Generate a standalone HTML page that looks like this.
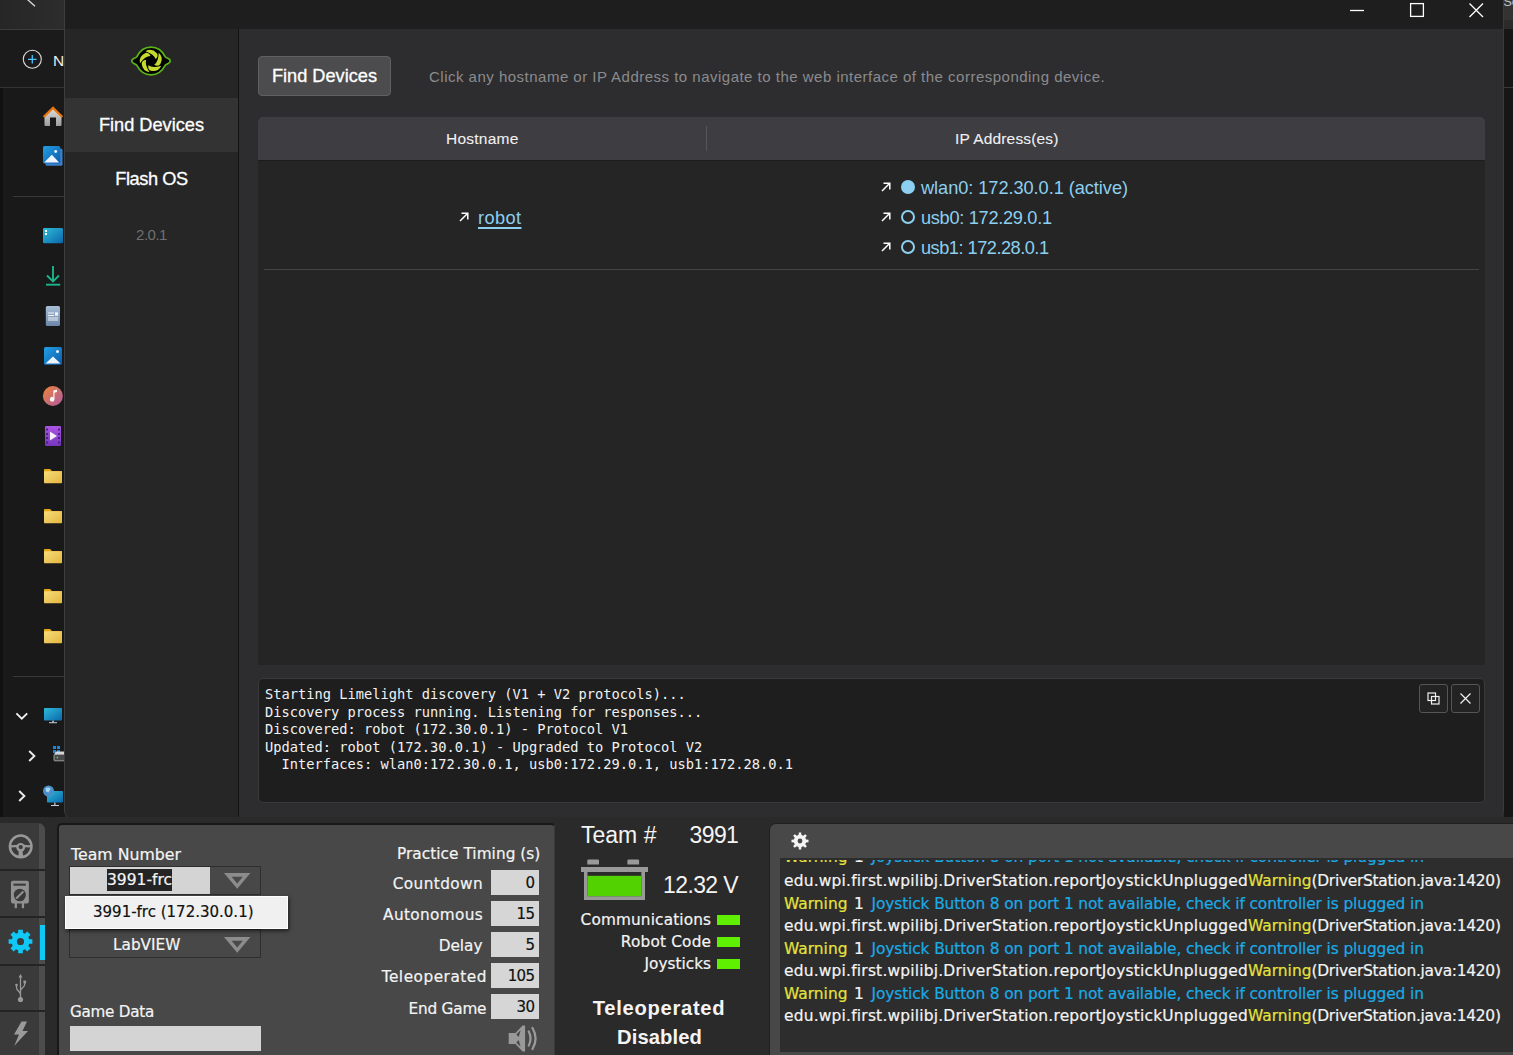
<!DOCTYPE html>
<html lang="en">
<head>
<meta charset="utf-8">
<title>Limelight Hardware Manager</title>
<style>
*{box-sizing:border-box;margin:0;padding:0}
html,body{width:1513px;height:1055px;overflow:hidden;background:#2a2a2a}
body{position:relative;font-family:"Liberation Sans",sans-serif;color:#fff}
.a{position:absolute}
.t{position:absolute;white-space:pre;line-height:1}
/* ---------- explorer (left, behind) ---------- */
#exp{left:0;top:0;width:65px;height:817px;background:#191919;overflow:hidden}
#exp .top{left:0;top:0;width:65px;height:29px;background:linear-gradient(90deg,#262626,#2d2d2d)}
#exp .tb{left:0;top:29px;width:65px;height:59px;background:#1b1b1b;border-top:1px solid #3b3b3b;border-bottom:1px solid #333}
#exp .strip{left:0;top:88px;width:3px;height:729px;background:#111}
/* ---------- right sliver ---------- */
#rs{left:1504px;top:0;width:9px;height:817px;background:#161616;overflow:hidden}
/* ---------- app window ---------- */
#win{left:64px;top:0;width:1440px;height:817px;background:#2d2d2f;border-left:1px solid #3d3d3d;border-right:1px solid #3a3a3a;border-radius:0 0 6px 6px;overflow:hidden}
#title{left:0;top:0;width:1440px;height:29px;background:#1e1e1e}
#side{left:0;top:29px;width:174px;height:788px;background:#262626;border-right:1px solid #131313}
#sel{left:0;top:69px;width:173px;height:54px;background:#333}

/* app text */
.nav{left:0;width:173px;text-align:center;font-size:18.2px;letter-spacing:0;color:#fff;-webkit-text-stroke:.3px #fff}
#btn{left:193px;top:56px;width:133px;height:40px;background:#4c4c4f;border:1px solid #606063;border-radius:4px;font-size:18.2px;letter-spacing:0;-webkit-text-stroke:.3px #fff;text-align:center;line-height:38px;color:#fff}
#hint{left:364px;top:69px;font-size:15px;letter-spacing:.49px;color:#8b8b8e}
#th{left:193px;top:117px;width:1227px;height:44px;background:#3e3d42;border-radius:5px 5px 0 0;border-bottom:1px solid #1d1d1d}
#th i{left:448px;top:9px;width:1px;height:25px;background:#56565a}
.h{font-size:15.5px;letter-spacing:.25px;-webkit-text-stroke:.1px #f0f0f0;color:#f0f0f0;top:14px}
#tb{left:193px;top:161px;width:1227px;height:504px;background:#252525}
#rowline{left:6px;top:108px;width:1215px;height:1px;background:#454547}
.lnk{font-size:18.2px;color:#8ccff0}
.arr{width:10px;height:10px}
.dot{width:14px;height:14px;border-radius:50%;border:2px solid #8ccff0}
.dot.f{background:#8ccff0}
#log{left:193px;top:678px;width:1227px;height:125px;background:#1e1e1e;border:1px solid #3a3a3c;border-radius:5px}
#log pre{position:absolute;left:6px;top:7px;font-family:"DejaVu Sans Mono","Liberation Mono",monospace;font-size:13.71px;line-height:17.5px;color:#f2f2f2}
.lb{top:5px;width:28.5px;height:28.5px;border:1px solid #55555a;border-radius:3px;background:#232323}

.d{font-family:"DejaVu Sans","Liberation Sans",sans-serif;color:#f4f4f4;-webkit-text-stroke:.2px currentColor}
.d.l{font-family:"Liberation Sans",sans-serif;-webkit-text-stroke:0}
#tabs{left:0;top:823px;width:45px;height:232px;background:#3a3a3a;border-radius:0 7px 0 0;overflow:hidden}
#tabs b{position:absolute;left:39.3px;top:0;width:5.7px;height:232px;background:#4c4c4c}
#tabs u{position:absolute;left:0;width:45px;height:2px;background:#242424}
#p1{left:57px;top:822.5px;width:498px;height:240px;background:#484848;border:2px solid #181818;border-right:1px solid #3a3a3a;border-radius:5px 4px 0 0}
#p2{left:769px;top:823px;width:760px;height:240px;background:#484848;border:1px solid #1f1f1f;border-radius:7px}
#msgs{left:780px;top:858px;width:733px;height:194px;background:#2d2d2d;overflow:hidden}
.fld{background:#d6d6d6;color:#111;text-align:right;font-size:15px;letter-spacing:-.65px;line-height:26.8px;padding-right:4.6px;width:48px;height:25px;left:491px}
.lab{font-size:15.3px;text-align:right;width:200px}
.m{left:4px;font-size:15.45px;white-space:pre;line-height:22px}
.y{color:#e6e23c}.bl{color:#1aabe6}

</style>
</head>
<body>
<!-- ============ EXPLORER ============ -->
<div id="exp" class="a">
  <div class="a top"></div>
  <div class="a tb"></div>
  <div class="a strip"></div>

  <svg class="a" style="left:0;top:0" width="0" height="0"><defs>
    <linearGradient id="gf" x1="0" y1="0" x2="1" y2="1"><stop offset="0" stop-color="#f8dc7c"/><stop offset="1" stop-color="#e2b53c"/></linearGradient>
    <linearGradient id="gb" x1="0" y1="0" x2="1" y2="1"><stop offset="0" stop-color="#22a0e4"/><stop offset="1" stop-color="#0c5aac"/></linearGradient>
    <linearGradient id="gc" x1="0" y1="0" x2="1" y2="1"><stop offset="0" stop-color="#2fbcd8"/><stop offset="1" stop-color="#0a66ac"/></linearGradient>
    <linearGradient id="gd" x1="0" y1="0" x2="0" y2="1"><stop offset="0" stop-color="#aabed6"/><stop offset="1" stop-color="#6a86a8"/></linearGradient>
    <linearGradient id="gm" x1="0" y1="0" x2="1" y2="1"><stop offset="0" stop-color="#ee8436"/><stop offset="1" stop-color="#b05aa4"/></linearGradient>
    <linearGradient id="gv" x1="0" y1="0" x2="0" y2="1"><stop offset="0" stop-color="#ac54e6"/><stop offset="1" stop-color="#7636bc"/></linearGradient>
    <linearGradient id="gh" x1="0" y1="0" x2="0" y2="1"><stop offset="0" stop-color="#dedede"/><stop offset="1" stop-color="#9c9c9c"/></linearGradient>
    <linearGradient id="gg" x1="0" y1="0" x2="0" y2="1"><stop offset="0" stop-color="#22b898"/><stop offset="1" stop-color="#14a884"/></linearGradient>
  </defs></svg>
  <svg class="a" style="left:26px;top:0" width="12" height="8" viewBox="0 0 12 8" fill="none" stroke="#dcdcdc" stroke-width="1.3"><path d="M1.5-.500L9 6.3"/></svg>
  <svg class="a" style="left:22px;top:49px" width="21" height="21" viewBox="0 0 21 21" fill="none"><circle cx="10.3" cy="10.3" r="9" stroke="#dedede" stroke-width="1.1"/><path d="M10.3 6v8.6M6 10.3h8.6" stroke="#4cc2ff" stroke-width="1.3"/></svg>
  <div class="t" style="left:53px;top:52.5px;font-size:15.5px;color:#eee">N</div>
  <svg class="a" style="left:42px;top:105px" width="22" height="22" viewBox="0 0 22 22"><path d="M2.5 10.5L11 3.5l8.5 7V20a1 1 0 0 1-1 1H14V12.5H8V21H3.5a1 1 0 0 1-1-1z" fill="url(#gh)"/><path d="M.800 11.3L11 1.3l10.2 10-1.6 1.5L11 4.6l-8.6 8.2z" fill="#e8760e"/></svg>
  <svg class="a" style="left:43px;top:146px" width="21" height="21" viewBox="0 0 21 21"><rect x="2.5" y="2.5" width="17" height="17.3" rx="1.5" fill="#3b7fc8"/><rect x="0" y="0" width="17.2" height="17.4" rx="1.5" fill="url(#gb)"/><path d="M1.2 16.4L8.8 8.8l7.4 7.6z" fill="#eef4fb"/><circle cx="12.7" cy="5.5" r="1.4" fill="#f4f4f4"/></svg>
  <div class="a" style="left:13px;top:196px;width:52px;height:1px;background:#383838"></div>
  <svg class="a" style="left:43px;top:228px" width="21" height="16" viewBox="0 0 21 16"><rect x="0" y="0" width="20" height="15.2" rx="1.3" fill="url(#gc)"/><rect x="2" y="2" width="2" height="2" fill="#fff"/><rect x="2" y="5" width="2" height="2" fill="#fff"/></svg>
  <svg class="a" style="left:45px;top:265px" width="16" height="22" viewBox="0 0 16 22" fill="none" stroke="url(#gg)" stroke-width="1.9"><path d="M8 1v15M2 10.5l6 6 6-6" stroke="#1cb48c"/><path d="M1 19.7h14.2" stroke="#1cb48c"/></svg>
  <svg class="a" style="left:45px;top:306px" width="16" height="21" viewBox="0 0 16 21"><rect x=".800" y="0" width="14.2" height="20" rx="1.5" fill="url(#gd)"/><path d="M3 7h6M3 9.5h6M3 12h10M3 14h10" stroke="#f0f3f8" stroke-width="1"/><rect x="10" y="6.3" width="3" height="3.4" fill="#f0f3f8"/></svg>
  <svg class="a" style="left:44px;top:347px" width="19" height="19" viewBox="0 0 19 19"><rect x="0" y="0" width="18" height="17.8" rx="1.5" fill="url(#gb)"/><path d="M1.5 16.5L9 9.5l7.5 7z" fill="#eef4fb"/><circle cx="13.5" cy="4.6" r="1.5" fill="#f4f4f4"/></svg>
  <svg class="a" style="left:42px;top:385px" width="22" height="22" viewBox="0 0 22 22"><circle cx="10.9" cy="11" r="10" fill="url(#gm)"/><path d="M11.3 5.5l3.7-1v2.6l-2.5.700v6.5a2.3 2.3 0 1 1-1.2-2z" fill="#f6f6f6"/></svg>
  <svg class="a" style="left:45px;top:426px" width="17" height="21" viewBox="0 0 17 21"><rect x="0" y="0" width="16" height="20" rx="1.3" fill="url(#gv)"/><path d="M5 5.5l7 4.5-7 4.5z" fill="#f4f0fa"/><path d="M1 2.5h2v2H1zM1 7h2v2H1zM1 11h2v2H1zM1 15.5h2v2H1zM13 2.5h2v2h-2zM13 7h2v2h-2zM13 11h2v2h-2zM13 15.5h2v2h-2z" fill="#4a2080"/></svg>
  <svg class="a" style="left:44px;top:469px" width="18" height="15" viewBox="0 0 18 15"><path d="M.8 0h5.4l1.6 2H17.2a.8.8 0 0 1 .8.8V3H0V.8A.8.8 0 0 1 .8 0z" fill="#e5a818"/><rect x="0" y="2.3" width="18" height="12" rx=".8" fill="url(#gf)"/></svg>
  <svg class="a" style="left:44px;top:509px" width="18" height="15" viewBox="0 0 18 15"><path d="M.8 0h5.4l1.6 2H17.2a.8.8 0 0 1 .8.8V3H0V.8A.8.8 0 0 1 .8 0z" fill="#e5a818"/><rect x="0" y="2.3" width="18" height="12" rx=".8" fill="url(#gf)"/></svg>
  <svg class="a" style="left:44px;top:549px" width="18" height="15" viewBox="0 0 18 15"><path d="M.8 0h5.4l1.6 2H17.2a.8.8 0 0 1 .8.8V3H0V.8A.8.8 0 0 1 .8 0z" fill="#e5a818"/><rect x="0" y="2.3" width="18" height="12" rx=".8" fill="url(#gf)"/></svg>
  <svg class="a" style="left:44px;top:589px" width="18" height="15" viewBox="0 0 18 15"><path d="M.8 0h5.4l1.6 2H17.2a.8.8 0 0 1 .8.8V3H0V.8A.8.8 0 0 1 .8 0z" fill="#e5a818"/><rect x="0" y="2.3" width="18" height="12" rx=".8" fill="url(#gf)"/></svg>
  <svg class="a" style="left:44px;top:629px" width="18" height="15" viewBox="0 0 18 15"><path d="M.8 0h5.4l1.6 2H17.2a.8.8 0 0 1 .8.8V3H0V.8A.8.8 0 0 1 .8 0z" fill="#e5a818"/><rect x="0" y="2.3" width="18" height="12" rx=".8" fill="url(#gf)"/></svg>
  <div class="a" style="left:13px;top:676px;width:52px;height:1px;background:#383838"></div>
  <svg class="a" style="left:15px;top:712px" width="14" height="9" viewBox="0 0 14 9" fill="none" stroke="#f0f0f0" stroke-width="1.9"><path d="M1.4 1.4L6.8 6.6L12.2 1.4"/></svg>
  <svg class="a" style="left:44px;top:708px" width="19" height="16" viewBox="0 0 19 16"><rect x="0" y="0" width="18" height="12.6" rx=".800" fill="url(#gc)"/><rect x="8" y="12.6" width="2" height="1.8" fill="#9aa"/><rect x="5" y="14.2" width="8" height="1" fill="#ccd"/></svg>
  <svg class="a" style="left:28.2px;top:750px" width="8" height="12" viewBox="0 0 8 12" fill="none" stroke="#ececec" stroke-width="1.9"><path d="M1.2 1L6.4 6L1.2 11"/></svg>
  <svg class="a" style="left:53px;top:746px" width="12" height="16" viewBox="0 0 12 16"><path d="M0 0h3v3H0zM4 0h3v3H4zM0 4h3v3H0zM4 4h3v3H4z" fill="#1b86d8"/><path d="M3 5.6h9v3H1z" fill="#d8d8d8"/><rect x="1" y="8.4" width="12" height="6.4" rx=".8" fill="#4a4a4a" stroke="#b8b8b8" stroke-width=".8"/><rect x="3.6" y="10.8" width="1.4" height="1.4" fill="#4ce04c"/></svg>
  <svg class="a" style="left:18.2px;top:790px" width="8" height="12" viewBox="0 0 8 12" fill="none" stroke="#ececec" stroke-width="1.9"><path d="M1.2 1L6.4 6L1.2 11"/></svg>
  <svg class="a" style="left:42px;top:785px" width="22" height="22" viewBox="0 0 22 22"><rect x="5" y="6" width="16" height="11.5" rx=".800" fill="url(#gc)"/><rect x="12" y="17.5" width="1.6" height="2.5" fill="#9aa"/><rect x="9" y="20" width="8" height="1" fill="#ccd"/><circle cx="6.5" cy="6" r="5.5" fill="#4a90c8"/><path d="M3.5 3.5c2-1.5 4-1 5 .5l-2 3.5-2.5-1z" fill="#a8d4f0"/></svg>
</div>
<div id="rs" class="a"><div class="a" style="left:0;top:0;width:9px;height:20px;background:#333"></div><div class="a" style="left:0;top:20px;width:9px;height:9px;background:#2b2b2b"></div><div class="a" style="left:0;top:87px;width:9px;height:1px;background:#3a3a3a"></div><div class="t" style="left:-.8px;top:-5px;font-size:13px;color:#c4c4c4">Se</div></div>

<!-- ============ APP WINDOW ============ -->
<div id="win" class="a">

  <div id="title" class="a">
    <svg class="a" style="left:1280px;top:0" width="150" height="29" viewBox="0 0 150 29" fill="none" stroke="#fff" stroke-width="1.3">
      <path d="M5 10.5h14"/>
      <rect x="65.6" y="3.6" width="12.8" height="12.8"/>
      <path d="M124.5 3.5l13.5 13.5M138 3.5l-13.5 13.5"/>
    </svg>
  </div>
  <div id="side" class="a">
    <div id="sel" class="a"></div>
    <svg class="a" style="left:65px;top:16px" width="42" height="32" viewBox="-21 -16 42 32"><path d="M-19.3 0C-19.3-2.2-16.3-2.4-14.3-4.2C-11.5-9.8-6.8-13.9 0-13.9S11.5-9.8 14.3-4.2C16.3-2.4 19.3-2.2 19.3 0S16.3 2.4 14.3 4.2C11.5 9.8 6.8 13.9 0 13.9S-11.5 9.8-14.3 4.2C-16.3 2.4-19.3 2.2-19.3 0Z" fill="#000" stroke="#5bb418" stroke-width="1.7" stroke-linejoin="round"/><g fill="#c6da2e" transform="scale(1.05)"><path d="M-5.2-9.4Q.5-12.8 5.6-7.4Q7.4-4.6 4.4-1.8Q3-6.5-5.2-9.4Z" transform="rotate(0)"/><path d="M-5.2-9.4Q.5-12.8 5.6-7.4Q7.4-4.6 4.4-1.8Q3-6.5-5.2-9.4Z" transform="rotate(72)"/><path d="M-5.2-9.4Q.5-12.8 5.6-7.4Q7.4-4.6 4.4-1.8Q3-6.5-5.2-9.4Z" transform="rotate(144)"/><path d="M-5.2-9.4Q.5-12.8 5.6-7.4Q7.4-4.6 4.4-1.8Q3-6.5-5.2-9.4Z" transform="rotate(216)"/><path d="M-5.2-9.4Q.5-12.8 5.6-7.4Q7.4-4.6 4.4-1.8Q3-6.5-5.2-9.4Z" transform="rotate(288)"/></g></svg>
    <div class="t nav" style="top:87px">Find Devices</div>
    <div class="t nav" style="top:141px;letter-spacing:-.4px">Flash OS</div>
    <div class="t nav" style="top:198px;font-size:15px;letter-spacing:-.5px;color:#707070;-webkit-text-stroke:0">2.0.1</div>
  </div>
  <div id="btn" class="t">Find Devices</div>
  <div id="hint" class="t">Click any hostname or IP Address to navigate to the web interface of the corresponding device.</div>
  <div id="th" class="a">
    <div class="t h" style="left:188px">Hostname</div>
    <i class="a"></i>
    <div class="t h" style="left:697px;letter-spacing:.15px">IP Address(es)</div>
  </div>
  <div id="tb" class="a">
    <svg class="a arr" style="left:201px;top:51px" viewBox="0 0 10 10" fill="none" stroke="#fff" stroke-width="1.5"><path d="M1 9L8.5 1.5M2.5 1.2h6.3v6.3"/></svg>
    <div class="t lnk" style="left:220px;top:48px;letter-spacing:.4px;text-decoration:underline;text-decoration-thickness:1.6px;text-underline-offset:3px">robot</div>
    <svg class="a arr" style="left:623px;top:21px" viewBox="0 0 10 10" fill="none" stroke="#fff" stroke-width="1.5"><path d="M1 9L8.5 1.5M2.5 1.2h6.3v6.3"/></svg>
    <svg class="a arr" style="left:623px;top:51px" viewBox="0 0 10 10" fill="none" stroke="#fff" stroke-width="1.5"><path d="M1 9L8.5 1.5M2.5 1.2h6.3v6.3"/></svg>
    <svg class="a arr" style="left:623px;top:81px" viewBox="0 0 10 10" fill="none" stroke="#fff" stroke-width="1.5"><path d="M1 9L8.5 1.5M2.5 1.2h6.3v6.3"/></svg>
    <div class="a dot f" style="left:643px;top:19px"></div>
    <div class="a dot" style="left:643px;top:49px"></div>
    <div class="a dot" style="left:643px;top:79px"></div>
    <div class="t lnk" style="left:663px;top:18px;letter-spacing:-.05px">wlan0: 172.30.0.1 (active)</div>
    <div class="t lnk" style="left:663px;top:48px;letter-spacing:-.3px">usb0: 172.29.0.1</div>
    <div class="t lnk" style="left:663px;top:78px;letter-spacing:-.5px">usb1: 172.28.0.1</div>
    <div id="rowline" class="a"></div>
  </div>
  <div id="log" class="a">
<pre>Starting Limelight discovery (V1 + V2 protocols)...
Discovery process running. Listening for responses...
Discovered: robot (172.30.0.1) - Protocol V1
Updated: robot (172.30.0.1) - Upgraded to Protocol V2
  Interfaces: wlan0:172.30.0.1, usb0:172.29.0.1, usb1:172.28.0.1</pre>
    <div class="a lb" style="left:1160px"><svg class="a" style="left:7px;top:7px" width="13" height="13" viewBox="0 0 13 13" fill="none" stroke="#f0f0f0" stroke-width="1.2"><rect x="1" y="1" width="7.5" height="7.5"/><rect x="4.5" y="4.5" width="7.5" height="7.5"/></svg></div>
    <div class="a lb" style="left:1192px"><svg class="a" style="left:8px;top:8px" width="11" height="11" viewBox="0 0 11 11" fill="none" stroke="#f0f0f0" stroke-width="1.2"><path d="M.5.5l10 10M10.5.5l-10 10"/></svg></div>
  </div>
</div>

<!-- ============ DRIVER STATION ============ -->

<div id="tabs" class="a"><b></b><u style="top:45.5px"></u><u style="top:93px"></u><u style="top:140.5px"></u><u style="top:187px"></u>
  <div class="a" style="left:40px;top:102px;width:5px;height:35px;background:#10c8f6"></div>

  <svg class="a" style="left:8px;top:11px" width="25" height="25" viewBox="0 0 25 25"><circle cx="12.7" cy="12.4" r="10.8" fill="none" stroke="#989898" stroke-width="2.5"/><path d="M2.5 11.2Q12.7 10.2 22.9 11.2V13.6Q12.7 12.6 2.5 13.6z" fill="#989898"/><circle cx="12.7" cy="13.3" r="4.4" fill="#989898"/><path d="M10.900 16L10.3 22.800h4.800L14.500 16z" fill="#989898"/><circle cx="12.7" cy="13.1" r="2.1" fill="#3a3a3a"/></svg>
  <svg class="a" style="left:10.3px;top:57px" width="20" height="29" viewBox="0 0 21 29" preserveAspectRatio="none"><path d="M3 .8h14.8a2 2 0 0 1 2 2V21.4a2 2 0 0 1-2 2H3a2 2 0 0 1-2-2V2.8a2 2 0 0 1 2-2z" fill="#919191"/><rect x="4.9" y="23" width="2.4" height="5.2" fill="#919191"/><rect x="12.4" y="23" width="2.4" height="5.2" fill="#919191"/><rect x="3.6" y="3.6" width="13" height="2.1" fill="#3a3a3a"/><circle cx="10.3" cy="15" r="6.3" fill="#3a3a3a"/><path d="M6.5 18.5L14 11.5" stroke="#919191" stroke-width="2.2"/></svg>
  <svg class="a" style="left:8px;top:106px" width="25" height="25" viewBox="0 0 25 25"><path d="M10.13 3.82L10.14 0.63L14.86 0.63L14.87 3.82L16.96 4.68L19.22 2.44L22.56 5.78L20.32 8.04L21.18 10.13L24.37 10.14L24.37 14.86L21.18 14.87L20.32 16.96L22.56 19.22L19.22 22.56L16.96 20.32L14.87 21.18L14.86 24.37L10.14 24.37L10.13 21.18L8.04 20.32L5.78 22.56L2.44 19.22L4.68 16.96L3.82 14.87L0.63 14.86L0.63 10.14L3.82 10.13L4.68 8.04L2.44 5.78L5.78 2.44L8.04 4.68ZM8.90 12.50a3.6 3.6 0 1 0 7.2 0a3.6 3.6 0 1 0 -7.2 0Z" fill="#10c8f6" fill-rule="evenodd"/></svg>
  <svg class="a" style="left:10px;top:150px" width="21" height="31" viewBox="0 0 21 31" fill="none" stroke="#9a9a9a" stroke-width="1.3"><path d="M10.5 3v22M10.5 21.5c0-3-4-3.5-4-7v-1.5M10.5 18c0-3 4.2-3.5 4.2-6.5v-1.5"/><path d="M10.5 1l2 3.5h-4z" fill="#9a9a9a" stroke="none"/><circle cx="10.5" cy="26.5" r="2.6" fill="#9a9a9a" stroke="none"/><circle cx="6.5" cy="12" r="1.3" fill="#9a9a9a" stroke="none"/><rect x="13.4" y="7.6" width="2.7" height="2.7" fill="#9a9a9a" stroke="none"/></svg>
  <svg class="a" style="left:13px;top:198px" width="16" height="26" viewBox="0 0 16 26"><path d="M8.5.5h5.5l-4.5 9.5h5.5L1.2 25l4.8-11.5H1z" fill="#9a9a9a"/></svg>
</div>
<div id="p1" class="a"></div>
<div class="t d" style="left:71px;top:846.5px;font-size:15.75px">Team Number</div>
<div class="a" style="left:69px;top:866px;width:192px;height:29px;border:1px solid #2e2e2e"></div>
<div class="a" style="left:70px;top:867px;width:140px;height:27px;background:#d4d4d4"></div>
<div class="t d" style="left:107px;top:869px;width:65px;height:22px;background:#242424;font-size:15.5px;line-height:22px;text-align:center">3991-frc</div>
<svg class="a" style="left:223.6px;top:873px" width="27" height="16" viewBox="0 0 27 16"><path d="M0 0h26.4L13.2 15.7z" fill="#8c8c8c"/><path d="M7.6 3.8h11.2L13.2 10.5z" fill="#4a4a4a"/></svg>
<div class="a" style="left:69px;top:929px;width:192px;height:29px;border:1px solid #2e2e2e"></div>
<div class="t d" style="left:113px;top:937.5px;font-size:15.3px">LabVIEW</div>
<svg class="a" style="left:223.6px;top:936.5px" width="27" height="16" viewBox="0 0 27 16"><path d="M0 0h26.4L13.2 15.7z" fill="#8c8c8c"/><path d="M7.6 3.8h11.2L13.2 10.5z" fill="#4a4a4a"/></svg>
<div class="a" style="left:65px;top:896px;width:223px;height:33px;background:#f0f0f0;border:1px solid #fff;box-shadow:1px 2px 4px rgba(0,0,0,.6)"></div>
<div class="t d" style="left:93px;top:905.3px;font-size:15px;color:#111">3991-frc (172.30.0.1)</div>
<div class="t d" style="left:70px;top:1005.4px;font-size:15.2px;letter-spacing:-.25px">Game Data</div>
<div class="a" style="left:70px;top:1026px;width:191px;height:25px;background:#d4d4d4"></div>

<div class="t d" style="left:397px;top:847.4px;font-size:15.3px;letter-spacing:.05px">Practice Timing (s)</div>
<div class="t d lab" style="left:283px;top:876.8px;letter-spacing:.39px">Countdown</div>
<div class="t d lab" style="left:283px;top:907.8px;letter-spacing:.34px">Autonomous</div>
<div class="t d lab" style="left:282.5px;top:938.8px">Delay</div>
<div class="t d lab" style="left:287px;top:969.8px;letter-spacing:.52px">Teleoperated</div>
<div class="t d lab" style="left:286.3px;top:1001.6px;letter-spacing:-.2px">End Game</div>
<div class="t d fld" style="top:869.7px">0</div>
<div class="t d fld" style="top:900.8px">15</div>
<div class="t d fld" style="top:932px">5</div>
<div class="t d fld" style="top:963.2px">105</div>
<div class="t d fld" style="top:994.3px">30</div>

<div class="t d l" style="left:581px;top:824.1px;font-size:23px">Team #</div>
<div class="t d l" style="left:689.5px;top:824.1px;font-size:23px;letter-spacing:-.6px">3991</div>
<div class="t d l" style="left:663px;top:874.1px;font-size:23px;letter-spacing:-.6px">12.32 V</div>
<div class="t d lab" style="left:511.2px;top:913px;letter-spacing:.15px">Communications</div>
<div class="t d lab" style="left:511.2px;top:935px;letter-spacing:.2px">Robot Code</div>
<div class="t d lab" style="left:511px;top:956.7px">Joysticks</div>
<div class="a" style="left:717px;top:915px;width:23px;height:10px;background:#5ef000"></div>
<div class="a" style="left:717px;top:937px;width:23px;height:10px;background:#5ef000"></div>
<div class="a" style="left:717px;top:959px;width:23px;height:10px;background:#5ef000"></div>
<div class="t d l" style="left:559px;top:998.1px;width:200px;text-align:center;font-size:20.2px;letter-spacing:.7px;font-weight:700">Teleoperated</div>
<div class="t d l" style="left:559.5px;top:1026.5px;width:200px;text-align:center;font-size:20.2px;letter-spacing:.1px;font-weight:700">Disabled</div>

<div id="p2" class="a"></div>

<svg class="a" style="left:581px;top:859px" width="68" height="42" viewBox="0 0 68 42"><path d="M7.3.6h9.7a1 1 0 0 1 1 1V5.5H6.3V1.6a1 1 0 0 1 1-1zM47.4.6h9.7a1 1 0 0 1 1 1V5.5H46.4V1.6a1 1 0 0 1 1-1zM0 8h67v5H64v28H3V13H0z" fill="#999"/><rect x="6.5" y="13" width="53.8" height="24.2" fill="#2a2a2a"/><rect x="6.5" y="16.8" width="53.8" height="20.4" fill="#52d200"/></svg>
<svg class="a" style="left:508px;top:1025px" width="31" height="27" viewBox="0 0 31 27"><path d="M.7 8h6.8l7-7.5h2.6v26h-2.6l-7-7.5H.7z" fill="#999"/><path d="M8.3 9.5l4.3-4.3-1.9 6.8zM8.3 17.5l4.3 4.3-1.9-6.8z" fill="#484848"/><path d="M20.8 6.5c2.2 4.4 2.2 9.6 0 14M24.5 3c3.8 6.5 3.8 14.5 0 21" fill="none" stroke="#999" stroke-width="2.3" stroke-linecap="round"/></svg>
<svg class="a" style="left:791px;top:832px" width="18" height="18" viewBox="0 0 18 18"><path d="M7.55 2.97 L7.86 0.48 L10.14 0.48 L10.45 2.97 L12.24 3.71 L14.22 2.16 L15.84 3.78 L14.29 5.76 L15.03 7.55 L17.52 7.86 L17.52 10.14 L15.03 10.45 L14.29 12.24 L15.84 14.22 L14.22 15.84 L12.24 14.29 L10.45 15.03 L10.14 17.52 L7.86 17.52 L7.55 15.03 L5.76 14.29 L3.78 15.84 L2.16 14.22 L3.71 12.24 L2.97 10.45 L0.48 10.14 L0.48 7.86 L2.97 7.55 L3.71 5.76 L2.16 3.78 L3.78 2.16 L5.76 3.71Z M6.6 9a2.4 2.4 0 1 0 4.8 0a2.4 2.4 0 1 0 -4.8 0Z" fill="#f4f4f4" fill-rule="evenodd"/></svg>
<div id="msgs" class="a">
  <div class="t d m y" style="top:-12.0px">Warning</div><div class="t d m" style="top:-12.0px;left:74px">1</div><div class="t d m bl" style="top:-12.0px;left:91.5px;letter-spacing:-.135px">Joystick Button 8 on port 1 not available, check if controller is plugged in</div>
  <div class="t d m" style="top:12px"><span style="letter-spacing:.2px">edu.wpi.first.wpilibj.DriverStation.reportJoystickUnplugged</span><span class="y">Warning</span><span style="letter-spacing:-.28px">(DriverStation.java:1420)</span></div>
  <div class="t d m y" style="top:34.5px">Warning</div><div class="t d m" style="top:34.5px;left:74px">1</div><div class="t d m bl" style="top:34.5px;left:91.5px;letter-spacing:-.135px">Joystick Button 8 on port 1 not available, check if controller is plugged in</div>
  <div class="t d m" style="top:57px"><span style="letter-spacing:.2px">edu.wpi.first.wpilibj.DriverStation.reportJoystickUnplugged</span><span class="y">Warning</span><span style="letter-spacing:-.28px">(DriverStation.java:1420)</span></div>
  <div class="t d m y" style="top:79.5px">Warning</div><div class="t d m" style="top:79.5px;left:74px">1</div><div class="t d m bl" style="top:79.5px;left:91.5px;letter-spacing:-.135px">Joystick Button 8 on port 1 not available, check if controller is plugged in</div>
  <div class="t d m" style="top:102px"><span style="letter-spacing:.2px">edu.wpi.first.wpilibj.DriverStation.reportJoystickUnplugged</span><span class="y">Warning</span><span style="letter-spacing:-.28px">(DriverStation.java:1420)</span></div>
  <div class="t d m y" style="top:124.5px">Warning</div><div class="t d m" style="top:124.5px;left:74px">1</div><div class="t d m bl" style="top:124.5px;left:91.5px;letter-spacing:-.135px">Joystick Button 8 on port 1 not available, check if controller is plugged in</div>
  <div class="t d m" style="top:147px"><span style="letter-spacing:.2px">edu.wpi.first.wpilibj.DriverStation.reportJoystickUnplugged</span><span class="y">Warning</span><span style="letter-spacing:-.28px">(DriverStation.java:1420)</span></div>
  <div class="a" style="left:0;top:0;width:733px;height:2.4px;background:#2d2d2d"></div>
</div>
</body>
</html>
